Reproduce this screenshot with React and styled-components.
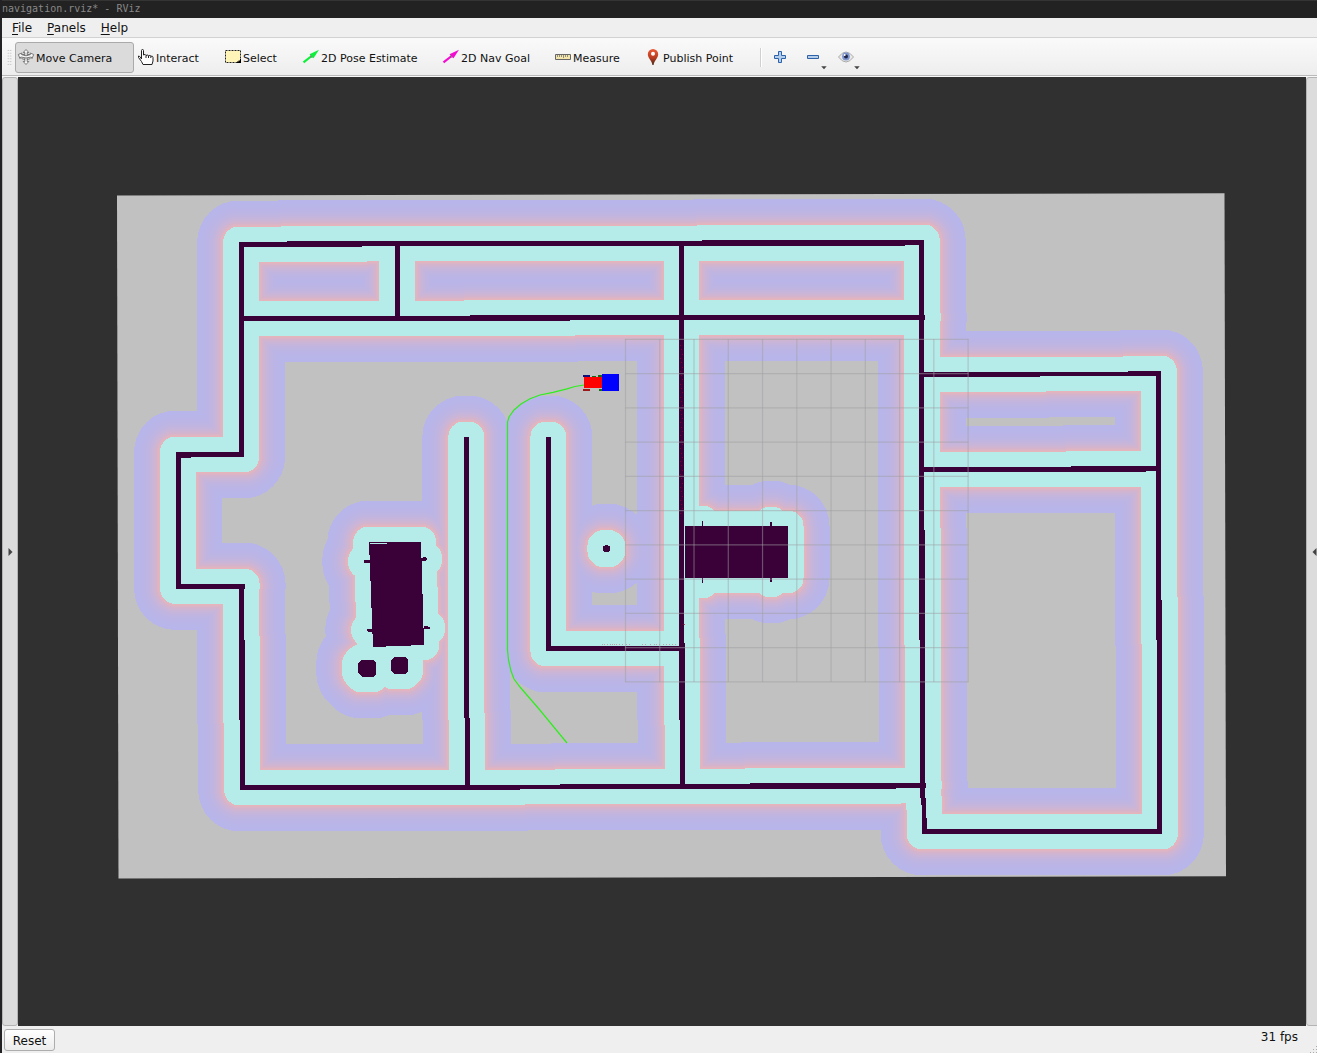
import React from "react";
import styled, { createGlobalStyle } from "styled-components";

const GlobalStyle = createGlobalStyle`
  html, body { margin: 0; padding: 0; overflow: hidden; }
  * { box-sizing: border-box; }
`;

const Window = styled.div`
  display: flex;
  flex-direction: column;
  width: 1317px;
  height: 1053px;
  overflow: hidden;
  background: #efefef;
  border-left: 2px solid #222224;
  font-family: "DejaVu Sans", sans-serif;
  color: #111;
`;

const TitleBar = styled.header`
  flex: none;
  height: 18px;
  margin-left: -2px;
  padding: 1px 0 0 2px;
  border-top: 1px solid #343434;
  background: #222;
  color: #888;
  font: 10px/13px "DejaVu Sans Mono", monospace;
  white-space: pre;
`;

const MenuBar = styled.nav`
  flex: none;
  display: flex;
  gap: 15px;
  height: 20px;
  padding: 1px 0 0 10px;
  border-bottom: 1px solid #d2d2d2;
  font-size: 12px;
  line-height: 19px;
`;

const MenuItem = styled.span`
  &::first-letter {
    text-decoration: underline;
    text-underline-offset: 2px;
  }
`;

const ToolBar = styled.div`
  flex: none;
  display: flex;
  align-items: center;
  height: 39px;
  border-bottom: 1px solid #f8f8f8;
  box-shadow: inset 0 -1px #b9bab9;
  background: linear-gradient(#fafafa, #ededed);
`;

const Grip = styled.div`
  width: 5px;
  height: 17px;
  margin: 0 3px 0 5px;
  background: radial-gradient(circle, #bbb 0.6px, transparent 0.9px) 0 0 / 2.5px 2.8px;
`;

const ToolButton = styled.button`
  display: flex;
  align-items: center;
  flex: none;
  width: ${(p) => p.$width}px;
  height: 31px;
  margin: 1px 1px 0 0;
  padding: 0 0 0 2px;
  gap: 2px;
  border: 1px solid ${(p) => (p.$active ? "#aaa" : "transparent")};
  border-radius: 3px;
  background: ${(p) => (p.$active ? "#dbdbdb" : "transparent")};
  color: #111;
  font: 11px "DejaVu Sans", sans-serif;
  white-space: nowrap;
`;

const ToolLabel = styled.span`
  padding-top: 1px;
`;

const Icon = styled.svg`
  flex: none;
  display: block;
  overflow: visible;
`;

const ToolIcon = styled(Icon)`
  margin-bottom: 1px;
`;

const Separator = styled.i`
  width: 2px;
  height: 19px;
  margin: 0 11px 0 -1px;
  border-left: 1px solid #d0d0d0;
  border-right: 1px solid #fff;
`;

const IconButton = styled.button`
  flex: none;
  display: flex;
  padding: 0;
  width: ${(p) => p.$width}px;
  margin-bottom: 1px;
  border: 0;
  background: none;
`;

const Workspace = styled.main`
  flex: none;
  display: flex;
  height: 949px;
`;

const DockHandle = styled.button`
  flex: none;
  display: flex;
  align-items: center;
  justify-content: center;
  width: 16px;
  padding: 0;
  border: 1px solid #b4b4b4;
  border-radius: 3px;
  background: #dcdcdc;
`;

const Viewport = styled.svg`
  flex: none;
  display: block;
  width: 1288px;
  height: 949px;
  background: #303030;
`;

const StatusBar = styled.footer`
  flex: 1;
  display: flex;
  justify-content: space-between;
  padding: 3px 0 0 2px;
  font-size: 12px;
`;

const ResetButton = styled.button`
  width: 51px;
  height: 22px;
  padding: 1px 0 0;
  border: 1px solid #adadad;
  border-radius: 3px;
  background: linear-gradient(#fff, #ececec);
  color: #111;
  font: 12px "DejaVu Sans", sans-serif;
`;

const StatusRight = styled.div`
  display: flex;
  gap: 11px;
`;

const Fps = styled.span`
  line-height: 17px;
`;

const SizeGrip = styled.i`
  align-self: flex-end;
  width: 8px;
  height: 8px;
  background: radial-gradient(circle, #aaa 0.6px, transparent 0.9px) 0 0 / 3px 3px;
  clip-path: polygon(100% 0, 100% 100%, 0 100%);
`;

const MoveIcon = () => (
  <ToolIcon width="16" height="16" viewBox="0 0 16 16">
    <g fill="#f6f6f6" stroke="#606060" strokeWidth="0.8" strokeLinejoin="round">
      <path d="M3.500 6Q8 3.500 12.500 6M3.500 9.500Q8 12.500 12.500 9.500" fill="none" />
      <path d="M8 .5 10.800 3.500H9.200V12.500H10.800L8 15.500 5.200 12.500H6.800V3.500H5.200Z" />
      <path d="M.3 5.500 3.800 4 3.600 5.600Q8 8 12.400 5.600L12.200 4 15.700 5.500 14 9.600 13.200 8Q8 10 2.800 8L2 9.600Z" />
    </g>
  </ToolIcon>
);

const HandIcon = () => (
  <ToolIcon width="16" height="16" viewBox="1 0 16 16">
    <path
      d="M4.500 10V1.500Q4.500.5 5.500.5T6.500 1.500V6Q8.500 4.500 9 6.500 11 5 11.500 7 13 5.800 14 7.200 16 6.800 16 8.500V12L15 15.500H6L4.500 12.500 1.500 8.500V7Q2.500 6.500 4.500 10Z"
      fill="#fff" stroke="#222"
    />
    <path d="M9 6.500V9M11.500 7V9M13.800 7.300V9" stroke="#222" fill="none" />
  </ToolIcon>
);

const SelectIcon = () => (
  <ToolIcon width="16" height="16" viewBox="0 0 16 16">
    <path d="M.5 1.500h15v12H.5Z" fill="#fff5b8" stroke="#222" strokeDasharray="2 1" />
    <path d="M16 10v4h-4v-1.500h1.500V11.500H15v-1.500Z" fill="#000" />
  </ToolIcon>
);

const ArrowIcon = ({ color }) => (
  <ToolIcon width="16" height="16" viewBox="0 0 16 16">
    <path d="M.5 13.300 8 7.500" stroke={color} strokeWidth="2.200" />
    <path d="M16 .8 6.500 5.300 10.500 9.300Z" fill={color} />
    <path d="m7 5.300 3 3.500-2.200-.3Z" fill="#333" opacity=".55" />
  </ToolIcon>
);

const RulerIcon = () => (
  <ToolIcon width="16" height="16" viewBox="0 0 16 16">
    <path d="M.5 5.500h15v5H.5Z" fill="#f4e5ab" stroke="#666" />
    <path d="M2.500 6v2m2-2v2m2-2v2m2-2v3m2-3v2m2-2v2" stroke="#777" strokeWidth=".8" />
  </ToolIcon>
);

const PinIcon = () => (
  <ToolIcon width="16" height="16" viewBox="0 0 16 16">
    <defs>
      <linearGradient id="pin" x2="0" y2="1">
        <stop stopColor="#ed5a36" />
        <stop offset=".55" stopColor="#b83c20" />
        <stop offset="1" stopColor="#4b2b19" />
      </linearGradient>
    </defs>
    <path d="M8 0a5.200 5.200 0 0 1 5.200 5.200C13.200 9 9 11.500 8.600 16H7.400C7 11.500 2.800 9 2.800 5.200A5.200 5.200 0 0 1 8 0Z" fill="url(#pin)" />
    <circle cx="8" cy="4.800" r="2" fill="#fff" />
  </ToolIcon>
);

const PlusIcon = () => (
  <Icon width="14" height="14" viewBox="0 0 14 14">
    <path d="M5.500 1.500h3v4h4v3h-4v4h-3v-4h-4v-3h4Z" fill="#b4cdeb" stroke="#2d62a8" strokeLinejoin="round" />
  </Icon>
);

const DropArrow = () => <path d="M15.200 16.200h5.500l-2.700 3Z" fill="#444" />;

const MinusIcon = () => (
  <Icon width="14" height="14" viewBox="0 0 14 14">
    <path d="M1.500 5.500h11v3h-11Z" fill="#b4cdeb" stroke="#2d62a8" strokeLinejoin="round" />
    <DropArrow />
  </Icon>
);

const EyeIcon = () => (
  <Icon width="16" height="14" viewBox="0 0 16 14">
    <path d="M.5 7Q8-3 15.500 7 8 17 .5 7Z" fill="#ebe9e5" stroke="#aaa" />
    <circle cx="8" cy="6.500" r="3.900" fill="#7e94ce" />
    <circle cx="8" cy="6.500" r="2" fill="#202849" />
    <circle cx="6.700" cy="5" r="1" fill="#fff" />
    <g transform="translate(1 0)"><DropArrow /></g>
  </Icon>
);

const TOOLS = [
  ["Move Camera", 119, <MoveIcon />],
  ["Interact", 86, <HandIcon />],
  ["Select", 77, <SelectIcon />],
  ["2D Pose Estimate", 139, <ArrowIcon color="#0df03a" />],
  ["2D Nav Goal", 111, <ArrowIcon color="#f50ad2" />],
  ["Measure", 89, <RulerIcon />],
  ["Publish Point", 118, <PinIcon />],
];

/* Occupied cells of the map, as polygons. */
const OBSTACLES = [
  "M239 242H287V241H702V240H924V245H905V246H362V247H239Z",
  "M395 243H400V319H395Z",
  "M239 316H470V315H925V320H570V321H239Z",
  "M239 242H244V457H239Z",
  "M176 452H244V457H191V458H176Z",
  "M176 452.500H181V588.500H176Z",
  "M176 584H244.500V588.500H176Z",
  "M239 584H244V640H245V790H240V720H239Z",
  "M240 785H560V784H750V783H926V788H896V789H520V790H240Z",
  "M464 437H469V718H470V786H465V718H464Z",
  "M546 437H551V651H546Z",
  "M546 646H685V651H546Z",
  "M679 243H684V643H685V786H680V720H679Z",
  "M685 526H788V578H685Z",
  "M702 521h1v5h-1ZM770 522h2v4h-2ZM702 578h1v5h-1ZM770 578h2v4h-2Z",
  "M919 240H924V530H925V798H926V818H927V834H922V805H921V798H920V640H919Z",
  "M919 372H1128V371H1161V376H1040V377H919Z",
  "M1156 371H1161V600H1162V834H1157V640H1156Z",
  "M919 467H1071V466H1160V471H1146V472H919Z",
  "M923 829H1162V834H923Z",
  "M369 542H421L424 645 373 647Z",
  "M364 560h6v3h-6ZM421 558h2v-1h3v1h1v2h-1v1h-5ZM367 629h6v3h-5v-1h-1ZM424 626h4v1h2v2h-6Z",
  "M361 660h12l3 3v11l-3 3h-11l-4-4v-10Z",
  "M394 657h11l3 3v11l-3 3h-11l-3-3v-11Z",
  "M605 545h3v1h2v5h-1v1h-5v-1h-1v-5h2Z",
].join("");

const INSCRIBED = 15.450;
const INFLATED = 41.450;

/* Inflation bands from the outermost radius inwards, cost falling off exponentially. */
const BANDS = Array.from({ length: 26 }, (_, i) => {
  const radius = INFLATED - i;
  const cost = Math.exp(-(radius - INSCRIBED - 1) / 7.200);
  const mix = (a, b) => Math.round(a + (b - a) * cost);
  return { radius, color: `rgb(${mix(181, 230)},${mix(181, 180)},${mix(235, 187)})` };
});

const GRID_LINES = Array.from({ length: 11 }, (_, i) => i * 34.260);
const SCAN_Y = Array.from({ length: 40 }, (_, i) => 345 + i * 4.300);
const SCAN_X = [602, 604, 607, 610, 612, 614, 616, 619, 622, 626, 629, 642, 645, 650, 654, 656, 659, 663, 666, 669, 672, 675];

const CostMap = () => (
  <Viewport viewBox="18 77 1288 949">
    <defs>
      <clipPath id="map-area">
        <path d="M117 195.500 1224.500 193.200 1226 876.200 118.500 878.500Z" />
      </clipPath>
    </defs>
    <g clipPath="url(#map-area)" shapeRendering="crispEdges">
      <path d="M117 190H1227V880H117Z" fill="#c1c1c1" />
      <g transform="matrix(1.00087 0 0 1 -0.610 0)" strokeLinejoin="round">
        {BANDS.map(({ radius, color }) => (
          <path key={radius} d={OBSTACLES} fill={color} stroke={color} strokeWidth={radius * 2} />
        ))}
        <path d={OBSTACLES} fill="#b5ecea" stroke="#b5ecea" strokeWidth={INSCRIBED * 2} />
      </g>
      <path d={OBSTACLES} fill="#3a0038" />
      <path d="M370 543h17v1h-17Z" fill="#b5ecea" />
    </g>
    <g fill="#9b0022" opacity=".7" shapeRendering="crispEdges">
      {SCAN_Y.map((y, i) => (
        <rect key={y} x={680 + (i * 7) % 3} y={Math.round(y)} width="1" height="1" />
      ))}
      <path d="M683 624h2v1h-2Z" />
    </g>
    <g fill="#b9a5a5" shapeRendering="crispEdges">
      {SCAN_X.map((x) => <rect key={x} x={x} y="644" width="1" height="1" />)}
    </g>
    <g stroke="#a0a0a4" strokeOpacity=".5" strokeWidth="1.200">
      {GRID_LINES.map((d) => (
        <React.Fragment key={d}>
          <path d={`M${625.500 + d} 339V682`} />
          <path d={`M625 ${339.300 + d}H968.500`} />
        </React.Fragment>
      ))}
    </g>
    <path
      d="M584 385 575 386.500 567 388.800 553 392.300 540 395 530 398.800 521 404 514 410 509 417 507.500 422V650L508.500 660 511 671 514 679 520 687 539 709 567 743"
      fill="none" stroke="#2eed1c" strokeWidth="1.200"
    />
    <g shapeRendering="crispEdges">
      <path d="M583 375h7v2h-7Z" fill="#10107a" />
      <path d="M598 375h4v2h-4ZM599 389h3v2h-3ZM592 376h4v1h-4Z" fill="#176b18" />
      <path d="M583 389h7v2h-7Z" fill="#9c1717" />
      <path d="M584 377h18v11h-18Z" fill="#f00" />
      <path d="M602 374h17v17h-17Z" fill="#00f" />
    </g>
  </Viewport>
);

const App = () => (
  <>
    <GlobalStyle />
    <Window>
      <TitleBar>navigation.rviz* - RViz</TitleBar>
      <MenuBar>
        {["File", "Panels", "Help"].map((name) => <MenuItem key={name}>{name}</MenuItem>)}
      </MenuBar>
      <ToolBar>
        <Grip />
        {TOOLS.map(([label, width, icon], i) => (
          <ToolButton key={label} $width={width} $active={i === 0}>
            {icon}
            <ToolLabel>{label}</ToolLabel>
          </ToolButton>
        ))}
        <Separator />
        <IconButton $width={33}><PlusIcon /></IconButton>
        <IconButton $width={32}><MinusIcon /></IconButton>
        <IconButton $width={20}><EyeIcon /></IconButton>
      </ToolBar>
      <Workspace>
        <DockHandle>
          <Icon width="5" height="8"><path d="M.5 0 4.500 4 .5 8Z" fill="#444" /></Icon>
        </DockHandle>
        <CostMap />
        <DockHandle>
          <Icon width="5" height="8"><path d="M4.500 0 .5 4 4.500 8Z" fill="#444" /></Icon>
        </DockHandle>
      </Workspace>
      <StatusBar>
        <ResetButton>Reset</ResetButton>
        <StatusRight>
          <Fps>31 fps</Fps>
          <SizeGrip />
        </StatusRight>
      </StatusBar>
    </Window>
  </>
);

export default App;
